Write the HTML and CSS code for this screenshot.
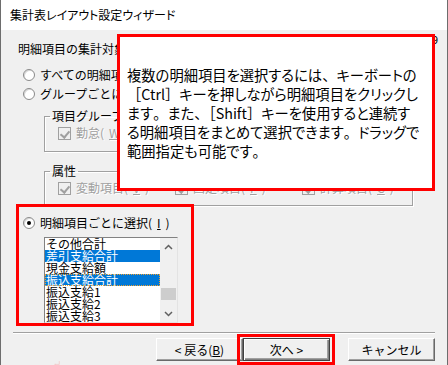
FILE: index.html
```html
<!DOCTYPE html>
<html lang="ja">

<head>
    <meta charset="UTF-8">
    <title>集計表レイアウト設定ウィザード</title>
    <link rel="stylesheet" href="styles.css">
</head>

<body>
    <div class="window">
        <div class="titlebar">集計表レイアウト設定ウィザード</div>

        <div class="content">
            <div class="head-row">
                <span class="head-label">明細項目の集計対象を指定してください。</span>
                <span class="head-peek">9</span>
            </div>

            <div class="radio"><span class="dot"></span>すべての明細項目を集計する(<u>A</u>)</div>
            <div class="radio"><span class="dot"></span>グループごとに選択する(<u>G</u>)</div>

            <fieldset class="group">
                <legend>項目グループ</legend>
                <div class="checks">
                    <span class="check"><span class="box"></span>勤怠(<u>W</u>)</span>
                    <span class="check"><span class="box"></span>支給(<u>S</u>)</span>
                    <span class="check"><span class="box"></span>控除(<u>K</u>)</span>
                </div>
            </fieldset>

            <fieldset class="group">
                <legend>属性</legend>
                <div class="checks">
                    <span class="check"><span class="box"></span>変動項目(<u>V</u>)</span>
                    <span class="check"><span class="box"></span>固定項目(<u>F</u>)</span>
                    <span class="check"><span class="box"></span>計算項目(<u>C</u>)</span>
                </div>
            </fieldset>

            <!-- 赤枠：明細項目ごとに選択 -->
            <div class="pick">
                <div class="radio on"><span class="dot"></span>明細項目ごとに選択(<u>I</u>)</div>
                <div class="listbox">
                    <ul class="items">
                        <li>その他合計</li>
                        <li class="sel">差引支給合計</li>
                        <li>現金支給額</li>
                        <li class="sel focus">振込支給合計</li>
                        <li>振込支給1</li>
                        <li>振込支給2</li>
                        <li>振込支給3</li>
                    </ul>
                    <div class="scroll">
                        <span class="arr"><svg width="9" height="6" viewBox="0 0 9 6"><path d="M1 5 L4.5 1.5 L8 5" fill="none" stroke="#606060" stroke-width="1.5"/></svg></span>
                        <span class="track"><span class="thumb"></span></span>
                        <span class="arr"><svg width="9" height="6" viewBox="0 0 9 6"><path d="M1 1 L4.5 4.5 L8 1" fill="none" stroke="#606060" stroke-width="1.5"/></svg></span>
                    </div>
                </div>
            </div>

            <div class="sep"></div>

            <div class="buttons">
                <span class="btn">&lt; 戻る(<u>B</u>)</span>
                <span class="btn default mark">次へ &gt;</span>
                <span class="btn cancel">キャンセル</span>
            </div>
        </div>

        <!-- 吹き出し -->
        <div class="callout">
            <p>複数の明細項目を選択するには<span class="fw">、</span>キーボートの<br><span class="fw">［</span>Ctrl<span class="fw">］</span>キーを押しながら明細項目をクリックし<br>ます<span class="fw">。</span>また<span class="fw">、［</span>Shift<span class="fw">］</span>キーを使用すると連続す<br>る明細項目をまとめて選択できます<span class="fw">。</span>ドラッグで<br>範囲指定も可能です<span class="fw">。</span></p>
        </div>

        <svg class="arrow" width="112" height="90" viewBox="0 0 112 90">
            <path d="M107 2 L107 76 L6 76" fill="none" stroke="#ff0000" stroke-width="3"/>
            <path d="M17 68 L6 76 L17 84" fill="none" stroke="#ff0000" stroke-width="3"/>
        </svg>
    </div>
</body>

</html>
```

FILE: styles.css
```css
* {
    padding: 0;
    margin: 0;
    box-sizing: border-box;
}

ul,
li {
    list-style: none;
}

body {
    width: 448px;
    height: 365px;
    overflow: hidden;
    font-family: "Noto Sans CJK JP", "Noto Sans", sans-serif;
    font-size: 12px;
    color: #000;
    background: #fff;
}

.window {
    position: relative;
    width: 448px;
    height: 365px;
    border-left: 1px solid #6d6d6d;
    border-right: 1px solid #6d6d6d;
    background: #f0f0f0;
    display: flex;
    flex-direction: column;
}

.titlebar {
    height: 30px;
    line-height: 30px;
    padding-left: 9px;
    background: #fff;
    font-feature-settings: "palt";
}

.content {
    flex: 1;
    display: flex;
    flex-direction: column;
    line-height: 12px;
}

.head-row {
    display: flex;
    justify-content: space-between;
    align-items: flex-start;
    padding: 5px 9px 0 17px;
}

.head-label {
    margin-top: 8px;
    white-space: nowrap;
}

.head-peek {
    font-size: 11px;
    line-height: 9px;
}

.radio {
    display: flex;
    align-items: center;
    gap: 5px;
    height: 12px;
    margin: 14px 0 0 22px;
    white-space: nowrap;
}

.radio + .radio {
    margin-top: 7px;
}

.dot {
    width: 12px;
    height: 12px;
    border-radius: 50%;
    border: 1px solid #8a8a8a;
    background: #fff;
    box-shadow: inset 1px 1px 0 #d8d8d8;
    display: flex;
    align-items: center;
    justify-content: center;
}

.radio.on .dot::after {
    content: "";
    width: 4px;
    height: 4px;
    border-radius: 50%;
    background: #000;
}

/* グループ枠 */
.group {
    margin: 10px 0 0 43px;
    width: 369px;
    padding: 5px 0 12px 5px;
    border: 1px solid #a0a0a0;
    box-shadow: 1px 1px 0 #fff, inset 1px 1px 0 #fff;
}

.group + .group {
    margin-top: 13px;
    padding-bottom: 11px;
}

.group legend {
    padding: 0 2px;
    line-height: 12px;
}

.checks {
    display: grid;
    grid-template-columns: 117px 127px auto;
    margin-left: 8px;
    color: #a0a0a0;
    text-shadow: 1px 1px 0 #fff;
    white-space: nowrap;
}

.check {
    display: flex;
    align-items: center;
    gap: 5px;
    height: 12px;
}

.box {
    width: 13px;
    height: 13px;
    border: 1px solid #a0a0a0;
    background: #f0f0f0;
    position: relative;
}

.box::after {
    content: "";
    position: absolute;
    left: 3px;
    top: 1px;
    width: 4px;
    height: 7px;
    border: solid #a0a0a0;
    border-width: 0 2px 2px 0;
    transform: rotate(40deg);
}

/* 赤枠 */
.pick {
    margin: -2px 0 0 15px;
    width: 178px;
    border: 3px solid #ff0000;
    padding: 10px 0 0 4px;
}

.pick .radio {
    margin: 0;
}

.listbox {
    display: flex;
    margin: 8px 0 0 21px;
    width: 134px;
    height: 86px;
    border: 1px solid;
    border-color: #828282 #e3e3e3 #e3e3e3 #828282;
    background: #fff;
    overflow: hidden;
}

.items {
    flex: 1;
}

.items li {
    height: 12px;
    line-height: 12px;
    padding-left: 1px;
    white-space: nowrap;
}

.items li.sel {
    background: #0078d7;
    color: #fff;
}

.items li.focus {
    outline: 1px dotted #f0a030;
    outline-offset: -1px;
}

.scroll {
    width: 17px;
    background: #f0f0f0;
    display: flex;
    flex-direction: column;
}

.arr {
    height: 17px;
    display: flex;
    align-items: center;
    justify-content: center;
}

.track {
    flex: 1;
    padding: 33px 1px 0;
}

.thumb {
    display: block;
    height: 12px;
    background: #cdcdcd;
}

.sep {
    margin: 6px 12px 0;
    border-top: 1px solid #a0a0a0;
    border-bottom: 1px solid #fff;
}

.buttons {
    display: flex;
    justify-content: flex-end;
    margin-top: 4px;
    padding-right: 12px;
}

.btn {
    position: relative;
    width: 87px;
    height: 23px;
    line-height: 21px;
    text-align: center;
    background: #f0f0f0;
    border: 1px solid;
    border-color: #fff #696969 #696969 #fff;
    box-shadow: inset -1px -1px 0 #a0a0a0;
}

.btn.default {
    border: 1px solid #404040;
    box-shadow: inset 1px 1px 0 #fff, inset -1px -1px 0 #808080, inset -2px -2px 0 #a0a0a0;
}

.btn.cancel {
    margin-left: 18px;
}

.btn.mark::after {
    content: "";
    position: absolute;
    left: -7px;
    right: -6px;
    top: -5px;
    bottom: -5px;
    border: 3px solid #ff0000;
}

/* 吹き出し */
.callout {
    position: absolute;
    left: 116px;
    top: 34px;
    width: 318px;
    height: 157px;
    border: 3px solid #ff0000;
    background: #fff;
    display: flex;
    align-items: center;
    padding-left: 7px;
}

.callout p {
    font-size: 14.3px;
    line-height: 19px;
    font-feature-settings: "palt";
    white-space: nowrap;
    color: #000;
}

.callout .fw {
    font-feature-settings: normal;
}
```
